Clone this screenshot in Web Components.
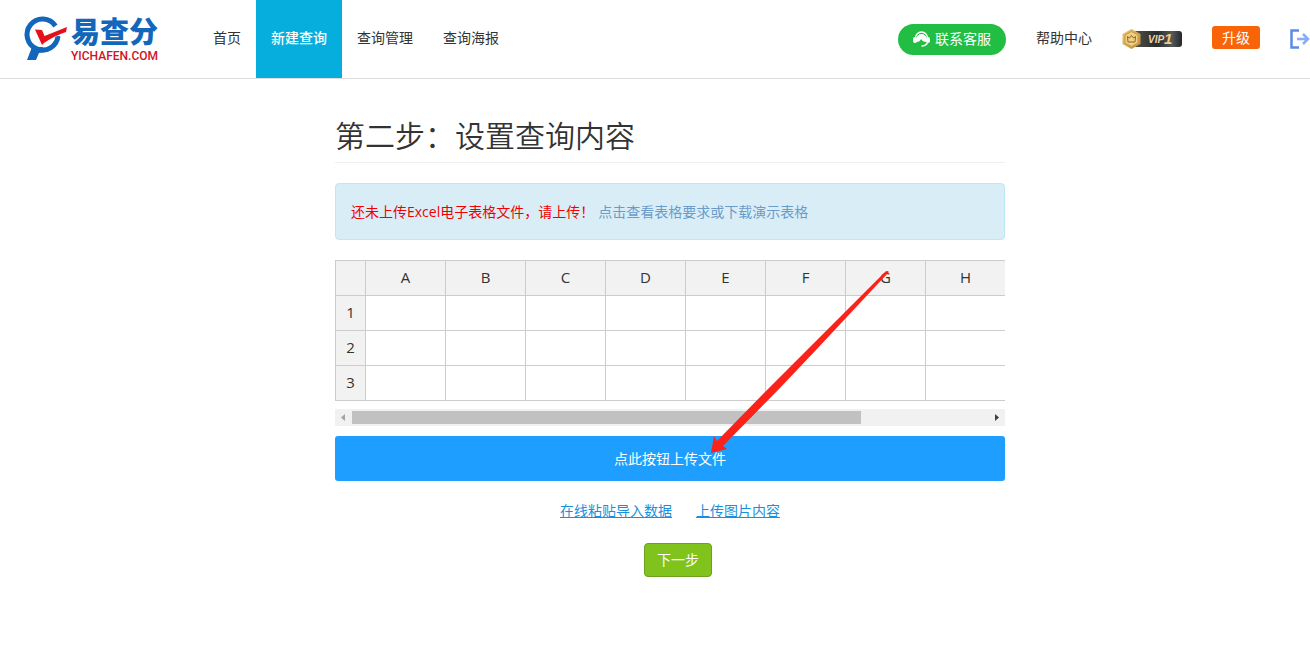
<!DOCTYPE html>
<html lang="zh-CN">
<head>
<meta charset="utf-8">
<meta name="viewport" content="width=device-width, initial-scale=1">
<title>易查分</title>
<style>
body {
  margin: 0;
  background: #fff;
  color: #333;
  font: 14px/20px "Open Sans", "Noto Sans CJK SC", sans-serif;
}
</style>
</head>
<body>
<yc-header>
  <yc-nav-item href="#home">首页</yc-nav-item>
  <yc-nav-item href="#create" active>新建查询</yc-nav-item>
  <yc-nav-item href="#manage">查询管理</yc-nav-item>
  <yc-nav-item href="#poster">查询海报</yc-nav-item>
</yc-header>
<yc-step heading="第二步：设置查询内容">
  <yc-alert>还未上传Excel电子表格文件，请上传！<a slot="link" href="#demo">点击查看表格要求或下载演示表格</a></yc-alert>
  <yc-uploader columns="A,B,C,D,E,F,G,H" rows="3">点此按钮上传文件</yc-uploader>
  <yc-actions>
    <a href="#paste">在线粘贴导入数据</a>
    <a href="#image">上传图片内容</a>
    <span slot="next">下一步</span>
  </yc-actions>
</yc-step>

<script>
/**
 * Shared base: every element renders its html getter into an open shadow root.
 */
class YcElement extends HTMLElement {
  constructor() {
    super();
    this.template = document.createElement("template");
    this.attachShadow({ mode: "open" });
  }

  connectedCallback() {
    this.render();
  }

  render() {
    this.template.innerHTML = this.html;
    this.shadowRoot.innerHTML = "";
    this.shadowRoot.appendChild(this.template.content.cloneNode(true));
  }
}

/**
 * `yc-logo`
 * magnifier with the tick, the name and the domain below it
 */
class YcLogo extends YcElement {
  get html() {
    return `
<style>
:host { display: block; }
a {
  display: grid;
  grid-template-columns: 47px 89px;
  align-items: end;
  text-decoration: none;
  white-space: nowrap;
}
svg { display: block; overflow: visible; }
.name {
  display: block;
  color: #1267bd;
  font: 900 29px/34px "Liberation Sans", "Noto Sans CJK SC", sans-serif;
}
.domain {
  display: block;
  color: #d5101e;
  font: 500 12px/12px Roboto, sans-serif;
}
</style>
<a href="#home">
  <svg width="42" height="46" viewBox="0 0 42 46">
    <path d="M31.500 10A15.500 15.500 0 1 0 34 20" fill="none" stroke="#1267bd" stroke-width="5"/>
    <path d="M8 31L3 44H12L15 37L25 35L18 31Z" fill="#1267bd"/>
    <path d="M11 13.500L18 14L20.500 20L43 11L42 16Q30 20 20 27L18 29Z" fill="#e60f1c" stroke="#fff" stroke-width="1" paint-order="stroke"/>
  </svg>
  <span>
    <span class="name">易查分</span>
    <span class="domain">YICHAFEN.COM</span>
  </span>
</a>`;
  }

  static get tag() {
    return "yc-logo";
  }
}
window.customElements.define(YcLogo.tag, YcLogo);

/**
 * `yc-nav-item`
 * one link of the top bar
 */
class YcNavItem extends YcElement {
  get html() {
    return `
<style>
:host { display: flex; }
a {
  display: flex;
  align-items: center;
  padding: 0 15px 2px;
  color: #333;
  text-decoration: none;
}
:host([active]) a {
  background: #06aedd;
  color: #fff;
  font-weight: 500;
}
</style>
<a href="${this.getAttribute("href")}"><slot></slot></a>`;
  }

  static get tag() {
    return "yc-nav-item";
  }
}
window.customElements.define(YcNavItem.tag, YcNavItem);

/**
 * `yc-vip-badge`
 */
class YcVipBadge extends YcElement {
  get html() {
    return `
<style>
:host { display: block; }
svg { display: block; }
text { font: italic 700 10px "Liberation Sans", sans-serif; fill: #ecd6ab; }
.level { font-size: 15px; fill: #f2c879; }
</style>
<svg width="60" height="20" viewBox="0 0 60 20">
  <defs>
    <linearGradient id="bar"><stop stop-color="#55534c"/><stop offset=".5" stop-color="#292b2d"/><stop offset=".8" stop-color="#55585b"/><stop offset="1" stop-color="#242628"/></linearGradient>
    <linearGradient id="gold" x2="1" y2="1"><stop stop-color="#e9c877"/><stop offset="1" stop-color="#bc8c35"/></linearGradient>
  </defs>
  <rect x="10" y="2" width="50" height="16" rx="3" fill="url(#bar)"/>
  <path d="M9.500 0L18.500 5V15L9.500 20L0.500 15V5Z" fill="url(#gold)"/>
  <path d="M9.500 2.500L16 6V14L9.500 17.500L3 14V6Z" fill="#f1d083" stroke="#c79a45"/>
  <path d="M5.500 7.500L7.500 9L9.500 6.500L11.500 9L13.500 7.500L13 13H6Z" fill="none" stroke="#8a6426"/>
  <text x="26" y="14">VIP</text>
  <text class="level" x="42" y="15">1</text>
</svg>`;
  }

  static get tag() {
    return "yc-vip-badge";
  }
}
window.customElements.define(YcVipBadge.tag, YcVipBadge);

/**
 * `yc-header`
 * top bar, the nav items are slotted in
 */
class YcHeader extends YcElement {
  get html() {
    return `
<style>
:host { display: block; border-bottom: 1px solid #ddd; overflow: hidden; }
header {
  display: flex;
  align-items: stretch;
  gap: 38px;
  height: 78px;
  padding-left: 24px;
}
yc-logo { align-self: center; }
nav { display: flex; }
.tools {
  display: flex;
  align-items: center;
  gap: 30px;
  margin-left: auto;
}
svg { display: block; }
a { color: #333; text-decoration: none; }
button { border: 0; font: inherit; color: #fff; cursor: pointer; }
.service {
  display: flex;
  align-items: center;
  gap: 5px;
  height: 31px;
  padding: 0 15px;
  border-radius: 16px;
  background: #22be44;
}
.tools a, .upgrade { margin-bottom: 3px; }
.upgrade {
  height: 23px;
  padding: 0 10px;
  border-radius: 3px;
  background: #f96409;
  line-height: 23px;
}
.logout { padding: 0; background: none; }
</style>
<header>
  <yc-logo></yc-logo>
  <nav><slot></slot></nav>
  <div class="tools">
    <button class="service">
      <svg width="17" height="16" viewBox="0 0 17 16">
        <path d="M2.500 7A6 6 0 0 1 14.500 7" fill="none" stroke="#fff" stroke-width="1.500"/>
        <path d="M3.500 8A5 5 0 0 1 13.500 8V11C11 11 9 10 8 8C7 10 6 11 3.500 11Z" fill="#fff"/>
        <rect y="6" width="4" height="6" rx="2" fill="#fff"/>
        <rect x="13" y="6" width="4" height="6" rx="2" fill="#fff"/>
        <path d="M14.500 11.500C13.500 14 11.500 15 8.500 15" fill="none" stroke="#fff" stroke-width="1.500"/>
      </svg>
      联系客服
    </button>
    <a href="#help">帮助中心</a>
    <yc-vip-badge></yc-vip-badge>
    <button class="upgrade">升级</button>
    <button class="logout" aria-label="退出">
      <svg width="20" height="20" viewBox="0 0 20 20" fill="none" stroke-width="2">
        <path d="M9 1.500H1.500V18.500H9" stroke="#5a8be8" stroke-width="2.500"/>
        <path d="M7 10H18M13 5L18 10L13 15" stroke="#86adf5" stroke-width="2.500"/>
      </svg>
    </button>
  </div>
</header>`;
  }

  static get tag() {
    return "yc-header";
  }
}
window.customElements.define(YcHeader.tag, YcHeader);

/**
 * `yc-step`
 * one step of the wizard: a heading and the content of the step
 */
class YcStep extends YcElement {
  get html() {
    return `
<style>
:host { display: block; padding: 40px 0 40px 30px; }
main {
  display: flex;
  flex-direction: column;
  gap: 20px;
  max-width: 670px;
  margin: 0 auto;
}
h1 {
  margin: 0;
  padding-bottom: 9px;
  border-bottom: 1px solid #eee;
  font-size: 30px;
  font-weight: 350;
  line-height: 34px;
}
</style>
<main>
  <h1>${this.getAttribute("heading")}</h1>
  <slot></slot>
</main>`;
  }

  static get tag() {
    return "yc-step";
  }
}
window.customElements.define(YcStep.tag, YcStep);

/**
 * `yc-alert`
 */
class YcAlert extends YcElement {
  get html() {
    return `
<style>
:host {
  display: block;
  padding: 18px 15px 17px;
  border: 1px solid #bce8f1;
  border-radius: 4px;
  background: #d9edf7;
  color: #f00000;
}
::slotted(a) { margin-left: 4px; color: #6a9bc9; text-decoration: none; }
</style>
<slot></slot><slot name="link"></slot>`;
  }

  static get tag() {
    return "yc-alert";
  }
}
window.customElements.define(YcAlert.tag, YcAlert);

/**
 * `yc-sheet`
 * empty spreadsheet with the scrollbar below it
 */
class YcSheet extends YcElement {
  get html() {
    const columns = this.getAttribute("columns").split(",");
    const rows = Array.from({ length: Number(this.getAttribute("rows")) }, (_, i) => i + 1);
    return `
<style>
:host { display: block; }
.view { overflow: hidden; }
table {
  table-layout: fixed;
  width: 671px;
  border: solid #ccc;
  border-width: 1px 0 0 1px;
  border-spacing: 0;
  font-size: 15px;
}
th, td {
  box-sizing: border-box;
  width: 80px;
  height: 35px;
  padding: 0 0 2px;
  border: solid #ccc;
  border-width: 0 1px 1px 0;
  font-weight: 400;
}
th { background: #f2f2f2; }
th:first-child, td:first-child { width: 30px; }
.bar {
  display: flex;
  align-items: center;
  height: 17px;
  margin-top: 8px;
  background: #f1f1f1;
}
.bar svg { flex: none; }
.track { flex: 1; }
.thumb { width: 80%; height: 13px; background: #c1c1c1; }
</style>
<div class="view">
  <table aria-label="表格">
    <thead>
      <tr><th></th>${columns.map(name => `<th scope="col">${name}</th>`).join("")}</tr>
    </thead>
    <tbody>
      ${rows.map(n => `<tr><th scope="row">${n}</th>${columns.map(() => "<td></td>").join("")}</tr>`).join("")}
    </tbody>
  </table>
</div>
<div class="bar">
  <svg width="17" height="17"><path d="M10 5V12L6 8.500Z" fill="#a3a3a3"/></svg>
  <div class="track"><div class="thumb"></div></div>
  <svg width="17" height="17"><path d="M7 5V12L11 8.500Z" fill="#404040"/></svg>
</div>`;
  }

  static get tag() {
    return "yc-sheet";
  }
}
window.customElements.define(YcSheet.tag, YcSheet);

/**
 * `yc-uploader`
 * sheet and upload button, the red arrow lies over both
 */
class YcUploader extends YcElement {
  get html() {
    return `
<style>
:host { display: block; position: relative; }
button {
  display: block;
  width: 100%;
  height: 45px;
  margin-top: 10px;
  border: 0;
  border-radius: 3px;
  background: #1e9fff;
  color: #fff;
  font: inherit;
  cursor: pointer;
}
.arrow {
  position: absolute;
  top: 10px;
  left: 375px;
  pointer-events: none;
}
</style>
<yc-sheet columns="${this.getAttribute("columns")}" rows="${this.getAttribute("rows")}"></yc-sheet>
<button><slot></slot></button>
<svg class="arrow" width="180" height="184" viewBox="0 0 180 184">
  <path d="M1 183L4 166L7 171L58 119L100 77L175 2Q177 0 179 2L178 3L106 80L69 119L13 176L17 179Z" fill="#fb2319"/>
</svg>`;
  }

  static get tag() {
    return "yc-uploader";
  }
}
window.customElements.define(YcUploader.tag, YcUploader);

/**
 * `yc-actions`
 * other ways to import, and the button to the next step
 */
class YcActions extends YcElement {
  get html() {
    return `
<style>
:host { display: block; }
.links { display: flex; justify-content: center; gap: 24px; }
::slotted(a) { color: #1a8fdb; }
.next { display: flex; justify-content: center; margin-top: 22px; padding-left: 16px; }
button {
  height: 34px;
  padding: 0 12px;
  border: 1px solid #6da01c;
  border-radius: 4px;
  background: #80c31c;
  color: #fff;
  font: inherit;
  cursor: pointer;
}
</style>
<div class="links"><slot></slot></div>
<div class="next"><button><slot name="next"></slot></button></div>`;
  }

  static get tag() {
    return "yc-actions";
  }
}
window.customElements.define(YcActions.tag, YcActions);
</script>
</body>
</html>
